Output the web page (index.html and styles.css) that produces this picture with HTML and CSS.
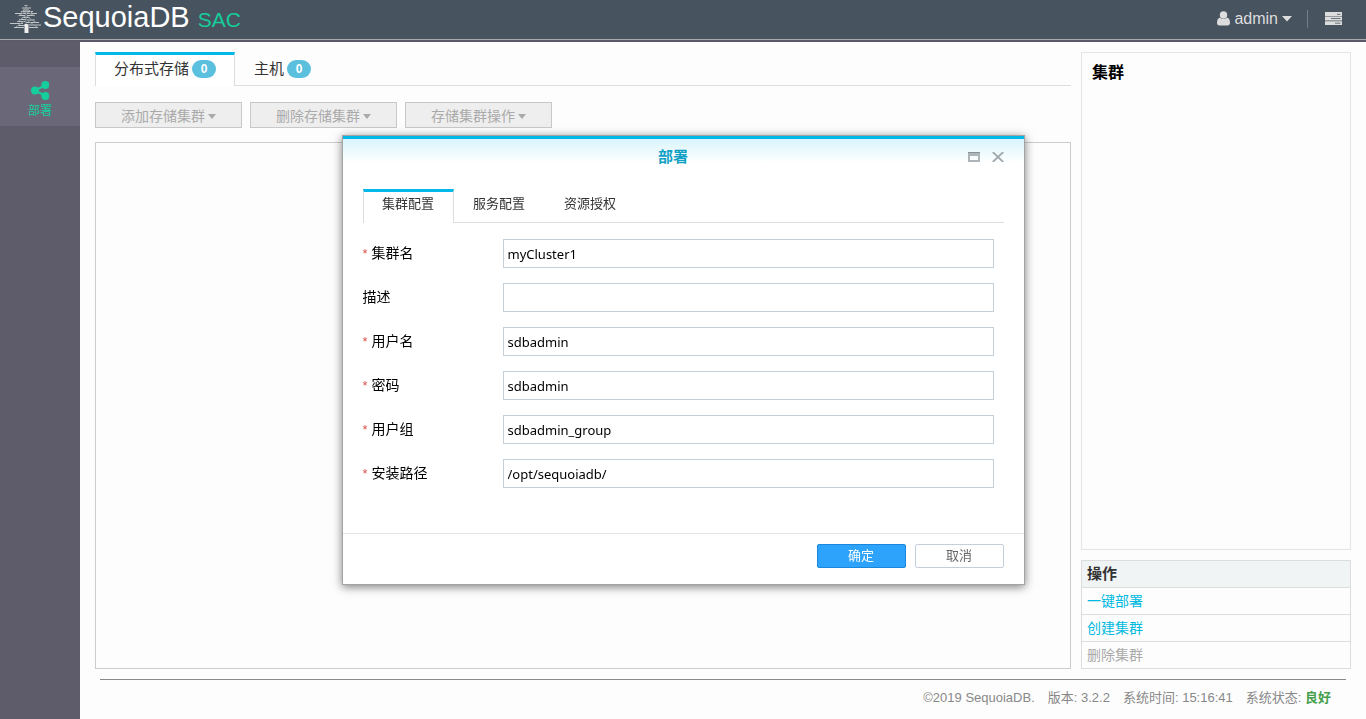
FILE: index.html
```html
<!DOCTYPE html>
<html lang="zh-CN">
<head>
<meta charset="utf-8">
<title>SequoiaDB SAC</title>
<link rel="stylesheet" href="styles.css">
</head>
<body>
<header class="topbar">
  <div class="brand">
    <svg class="brand-tree" viewBox="0 0 32 32" aria-hidden="true">
      <path class="needles" d="M14.500 2.500h3M12 5h9M13 7h6M11 8.500h12M5 10.500h11M17 10.500h10M9 12.500h6M17 12.500h8M12 14.500h8M9 16.500h7M17 17h8M7 18.500h8M0 20.500h13M16 19.500h13M8 22.500h7M17 22h14M4 24.500h10M19 24.500h9"/>
      <path class="branches" d="M16 2v23M16 4l-5 6M16 4l6 6M15 9l-7 4M17 9l8 4M15 13l-8 6M17 13l8 6M14 18l-8 6M18 18l9 6"/>
      <path class="trunk" d="M14.500 21h3l1 2v7h-4v-7z"/>
    </svg>
    <span class="brand-name">SequoiaDB</span>
    <span class="brand-sub">SAC</span>
  </div>
  <div class="account">
    <button class="plain user" type="button">
      <svg class="user-icon" viewBox="0 0 13 15" aria-hidden="true"><circle cx="6.500" cy="4" r="3.700"/><path d="M3 6.500C1 7 0 9 0 12c0 1.500 1 2.500 2.300 2.500h8.400c1.300 0 2.300-1 2.300-2.500 0-3-1-5-3-5.500-2 2-5 2-7 0z"/></svg>
      admin
      <svg class="caret-big" viewBox="0 0 10 6" aria-hidden="true"><path d="M0 0h10L5 5.500z"/></svg>
    </button>
    <span class="divider"></span>
    <button class="plain" type="button" aria-label="服务器">
      <svg class="server-icon" viewBox="0 0 17 13" aria-hidden="true"><path d="M0 0h17v4H0zM0 4.600h17v4H0zM0 9.200h17V13H0z"/><path class="slot" d="M12 2.300h3.500M6 6.500h9.500M10 11.200h5.500"/></svg>
    </button>
  </div>
</header>
<div class="body">
  <nav class="sidebar">
    <a class="side-item" href="#deploy">
      <svg class="share-icon" viewBox="0 0 19 19" aria-hidden="true"><path d="M14.500 4L4 9.500 14.500 15"/><circle cx="3.900" cy="9.500" r="3.900"/><circle cx="14.300" cy="4" r="3.900"/><circle cx="14.300" cy="15" r="3.900"/></svg>
      <span>部署</span>
    </a>
  </nav>
  <div class="page">
    <div class="columns">
      <main class="main">
        <div class="tabs">
          <button class="tab active" type="button">分布式存储 <span class="badge">0</span></button>
          <button class="tab" type="button">主机 <span class="badge">0</span></button>
        </div>
        <div class="toolbar">
          <button class="tool" type="button" disabled>添加存储集群 <svg class="caret" viewBox="0 0 8 5" aria-hidden="true"><path d="M0 0h8L4 5z"/></svg></button>
          <button class="tool" type="button" disabled>删除存储集群 <svg class="caret" viewBox="0 0 8 5" aria-hidden="true"><path d="M0 0h8L4 5z"/></svg></button>
          <button class="tool" type="button" disabled>存储集群操作 <svg class="caret" viewBox="0 0 8 5" aria-hidden="true"><path d="M0 0h8L4 5z"/></svg></button>
        </div>
        <div class="canvas"></div>
      </main>
      <aside class="aside">
        <section class="panel"><h2>集群</h2></section>
        <section class="actions">
          <h3>操作</h3>
          <a href="#quick">一键部署</a>
          <a href="#create">创建集群</a>
          <a class="off" aria-disabled="true">删除集群</a>
        </section>
      </aside>
    </div>
    <footer class="footer">
      <span>©2019 SequoiaDB.</span>
      <span>版本: 3.2.2</span>
      <span>系统时间: 15:16:41</span>
      <span>系统状态: <b>良好</b></span>
    </footer>
  </div>
</div>
<div class="overlay">
  <form class="dialog" role="dialog" aria-labelledby="dialog-title">
    <div class="dialog-head">
      <h1 id="dialog-title">部署</h1>
      <div class="dialog-tools">
        <button class="plain" type="button" aria-label="最大化"><svg class="win-icon" viewBox="0 0 12 10" aria-hidden="true"><path d="M0 0h12v10H0zM2 4v4h8V4z" fill-rule="evenodd"/><path class="win-top" d="M0 .5h12"/></svg></button>
        <button class="plain" type="button" aria-label="关闭"><svg class="close-icon" viewBox="0 0 12 10" aria-hidden="true"><path d="M.8 0L11.200 10M11.200 0L.8 10"/></svg></button>
      </div>
    </div>
    <div class="dialog-body">
      <div class="tabs small">
        <button class="tab active" type="button">集群配置</button>
        <button class="tab" type="button">服务配置</button>
        <button class="tab" type="button">资源授权</button>
      </div>
      <div class="fields">
        <div class="field"><label for="f1"><i>*</i>集群名</label><input id="f1" type="text" value="myCluster1"></div>
        <div class="field"><label for="f2">描述</label><input id="f2" type="text"></div>
        <div class="field"><label for="f3"><i>*</i>用户名</label><input id="f3" type="text" value="sdbadmin"></div>
        <div class="field"><label for="f4"><i>*</i>密码</label><input id="f4" type="text" value="sdbadmin"></div>
        <div class="field"><label for="f5"><i>*</i>用户组</label><input id="f5" type="text" value="sdbadmin_group"></div>
        <div class="field"><label for="f6"><i>*</i>安装路径</label><input id="f6" type="text" value="/opt/sequoiadb/"></div>
      </div>
    </div>
    <div class="dialog-foot">
      <button class="btn primary" type="button">确定</button>
      <button class="btn" type="button">取消</button>
    </div>
  </form>
</div>
</body>
</html>
```
FILE: styles.css
```css
* { box-sizing: border-box; }
body {
  margin: 0;
  height: 100vh;
  display: flex;
  flex-direction: column;
  background: #fdfdfd;
  color: #333;
  font: 14px/20px "Liberation Sans", "Noto Sans CJK SC", sans-serif;
}
button, input { font: inherit; color: inherit; }
h1, h2, h3 { margin: 0; }
a { text-decoration: none; }
svg { display: block; }
.plain { display: flex; align-items: center; padding: 0; border: 0; background: none; }

.topbar {
  flex: none;
  display: flex;
  justify-content: space-between;
  height: 42px;
  padding: 0 24px 2px 10px;
  background: linear-gradient(#47535f 39px, #a9a9ae 39px, #a9a9ae 40px, #5c596a 40px);
}
.brand { display: flex; align-items: baseline; }
.brand-tree { align-self: flex-start; width: 32px; height: 32px; margin: 3px 1px 0 0; fill: none; stroke: #c3c7c9; }
.brand-tree .branches { stroke-width: 1; stroke: #929a9f; }
.brand-tree .trunk { fill: #eee; stroke: none; }
.brand-name { color: #fff; font-size: 29px; line-height: 34px; }
.brand-sub { margin-left: 8px; color: #15ce9c; font-size: 21px; }
.account { display: flex; align-items: center; height: 37px; color: #ddd; fill: #ddd; font-size: 16px; }
.user { gap: 4px; }
.user-icon { width: 13px; height: 15px; }
.caret-big { width: 10px; height: 6px; }
.divider { width: 1px; height: 18px; margin: 0 17px 0 15px; background: #777e85; }
.server-icon { width: 17px; height: 13px; }
.slot { stroke: #6a747c; }

.body { flex: 1; display: flex; min-height: 0; }
.sidebar { flex: none; width: 80px; padding-top: 25px; background: #5e5b6b; }
.side-item {
  display: flex;
  flex-direction: column;
  align-items: center;
  gap: 1px;
  height: 59px;
  padding-top: 14px;
  background: #6a6778;
  color: #15ce9c;
  font-size: 12px;
}
.share-icon { width: 19px; height: 19px; fill: #15ce9c; }
.share-icon path { fill: none; stroke: #15ce9c; stroke-width: 2; }

.page { flex: 1; display: flex; flex-direction: column; min-width: 0; padding: 10px 15px 0; }
.columns { flex: 1; display: flex; gap: 10px; min-height: 0; }
.main { flex: 1; display: flex; flex-direction: column; }
.tabs { display: flex; height: 34px; border-bottom: 1px solid #ddd; font-size: 15px; }
.tab {
  display: flex;
  align-items: center;
  gap: 3px;
  height: 34px;
  padding: 0 18px 4px;
  border: 1px solid transparent;
  border-top-width: 3px;
  border-bottom: 0;
  background: none;
}
.tab.active { border-color: #00b9e8 #ddd; background: #fff; }
.badge {
  width: 24px;
  border-radius: 9px;
  background: #5bc0de;
  color: #fff;
  font-size: 12px;
  font-weight: bold;
  line-height: 18px;
}
.toolbar { display: flex; gap: 8px; margin: 16px 0 14px; }
.tool {
  display: flex;
  align-items: center;
  justify-content: center;
  gap: 3px;
  width: 147px;
  height: 26px;
  padding: 2px 0 0;
  border: 1px solid #c8c8c8;
  background: #eee;
  color: #aaa;
  font-size: 14px;
}
.caret { width: 8px; height: 5px; fill: #aaa; }
.canvas { flex: 1; border: 1px solid #ccc; }
.aside { flex: none; display: flex; flex-direction: column; gap: 10px; width: 270px; }
.panel { flex: 1; padding: 9px 10px; border: 1px solid #e1e5e5; }
.panel h2 { color: #000; font-size: 16px; line-height: 22px; }
.actions { border: 1px solid #ddd; }
.actions > * { display: block; height: 27px; padding: 0 5px; font-size: 14px; line-height: 26px; border-bottom: 1px solid #ddd; }
.actions > :last-child { height: 26px; border-bottom: 0; }
.actions h3 { background: #f0f4f5; font-size: 15px; }
.actions a { color: #00b9e0; }
.actions .off { color: #aaa; }
.footer {
  display: flex;
  justify-content: flex-end;
  gap: 13px;
  height: 40px;
  margin: 10px 5px 0;
  padding: 8px 15px 0 0;
  border-top: 1px solid #888;
  color: #888;
  font-size: 13px;
}
.footer b { color: #46a04e; }

.overlay { position: fixed; inset: 0; display: flex; align-items: center; justify-content: center; }
.dialog {
  width: 50%;
  border: 1px solid #a3a3a3;
  background: #fff;
  box-shadow: 0 2px 9px rgba(0, 0, 0, 0.5);
}
.dialog-head {
  display: grid;
  grid-template-columns: 1fr auto 1fr;
  align-items: center;
  height: 37px;
  padding: 2px 20px 0 0;
  border-top: 3px solid #00b9e8;
  background: linear-gradient(#d9f5fb, #fff 24px);
}
.dialog-head h1 { grid-column: 2; color: #0e9fc4; font-size: 15px; }
.dialog-tools { display: flex; justify-content: flex-end; gap: 12px; }
.win-icon { width: 12px; height: 10px; fill: #adb5b9; }
.win-top { stroke: #889195; }
.close-icon { width: 12px; height: 10px; stroke: #a0a9ad; stroke-width: 1.800; }
.dialog-body { padding: 16px 20px 45px; }
.small { font-size: 13px; }
.small .tab { width: 91px; padding: 0 0 6px; justify-content: center; }
.fields { display: flex; flex-direction: column; gap: 15px; padding: 16px 10px 0 0; color: #000; }
.field { display: flex; align-items: center; height: 29px; }
.field label { flex: none; width: 140px; }
.field i { margin-right: 4px; color: #d9534f; font-size: 13px; font-style: normal; }
.field input {
  flex: 1;
  height: 29px;
  padding: 2px 4px 0;
  border: 1px solid #c5cfd8;
  background: #fff;
  font-family: "Noto Sans", "Noto Sans CJK SC", sans-serif;
  font-size: 13px;
}
.dialog-foot { display: flex; justify-content: flex-end; gap: 9px; padding: 10px 20px 16px; border-top: 1px solid #e5e5e5; }
.btn {
  width: 89px;
  height: 24px;
  padding: 0;
  border: 1px solid #c5cfdc;
  border-radius: 2px;
  background: #fff;
  color: #666;
  font-size: 13px;
}
.primary { border-color: #1a87dc; background: #2ea3fb; color: #fff; }
```
